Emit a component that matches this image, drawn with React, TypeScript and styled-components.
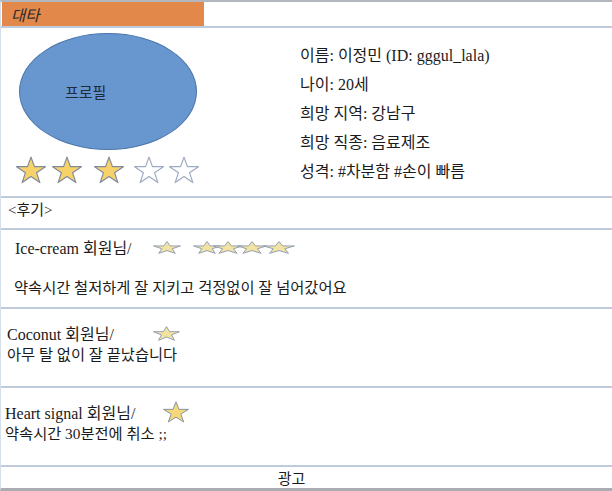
import React from "react";
import styled, { createGlobalStyle } from "styled-components";

const GlobalStyle = createGlobalStyle`
  html, body { margin: 0; padding: 0; background: #ffffff; }
  * { box-sizing: border-box; }
`;

const SERIF = `"Liberation Serif", "Noto Sans CJK KR", serif`;
const SANS = `"Noto Sans CJK KR", "Noto Sans", sans-serif`;

const Page = styled.div`
  width: 612px;
  height: 491px;
  display: flex;
  flex-direction: column;
  border-top: 2px solid #b3b7bd;
  border-bottom: 3px solid #a9adb3;
  border-left: 1px solid #d6dee9;
  font-family: ${SERIF};
  color: #1b1b1b;
  overflow: hidden;
`;

const Section = styled.div<{ $h: number }>`
  height: ${(p) => p.$h}px;
  flex: 0 0 auto;
  border-bottom: 2px solid #bfcbdc;
  position: relative;
`;

const HeaderTab = styled.div`
  width: 202px;
  height: 100%;
  margin-left: 1px;
  background: #e2884a;
  font-family: ${SANS};
  font-style: italic;
  font-size: 15.5px;
  line-height: 24px;
  padding-left: 9px;
  color: #2a2a2a;
`;

const ProfileGrid = styled.div`
  display: grid;
  grid-template-columns: 299px 1fr;
  height: 100%;
`;

const LeftCol = styled.div`
  display: flex;
  flex-direction: column;
  padding-left: 18px;
  padding-top: 5px;
`;

const Avatar = styled.div`
  width: 178px;
  height: 117px;
  border-radius: 50%;
  background: #6896cf;
  border: 1px solid #4d76ab;
  display: flex;
  align-items: center;
  padding-left: 45px;
  font-family: ${SANS};
  font-size: 15px;
  color: #1f2a3a;
`;

const StarRow = styled.div`
  display: flex;
  align-items: center;
  margin-top: 6px;
  margin-left: -3px;
`;

const StarSlot = styled.span<{ $ml: number }>`
  display: inline-flex;
  margin-left: ${(p) => p.$ml}px;
`;

const InfoList = styled.div`
  padding-top: 13px;
  display: flex;
  flex-direction: column;
`;

const InfoLine = styled.div`
  font-size: 16px;
  line-height: 29px;
  white-space: nowrap;
`;

const PlainLine = styled.div<{ $pl: number }>`
  font-size: 15px;
  line-height: 24px;
  padding-left: ${(p) => p.$pl}px;
  white-space: nowrap;
`;

const ReviewHead = styled.div<{ $pl: number; $pt: number }>`
  display: flex;
  align-items: center;
  padding-left: ${(p) => p.$pl}px;
  padding-top: ${(p) => p.$pt}px;
  font-size: 16px;
  height: 22px;
  box-sizing: content-box;
  white-space: nowrap;
`;

const Name = styled.span<{ $w: number }>`
  display: inline-block;
  width: ${(p) => p.$w}px;
`;

const ReviewBody = styled.div<{ $pl: number; $mt: number }>`
  padding-left: ${(p) => p.$pl}px;
  margin-top: ${(p) => p.$mt}px;
  font-size: 15.3px;
  line-height: 22px;
  white-space: nowrap;
`;

const SmallStars = styled.span`
  display: inline-flex;
  align-items: center;
`;

const Overlap = styled.span<{ $ml: number }>`
  display: inline-flex;
  margin-left: ${(p) => p.$ml}px;
`;

const AdBar = styled.div`
  flex: 1 1 auto;
  display: flex;
  align-items: center;
  justify-content: center;
  font-family: ${SANS};
  font-size: 15px;
  padding-right: 30px;
`;

type StarProps = { w: number; h: number; fill: string; stroke: string; sw?: number };

const Star: React.FC<StarProps> = ({ w, h, fill, stroke, sw = 3 }) => (
  <svg width={w} height={h} viewBox="0 0 100 100" preserveAspectRatio="none">
    <polygon
      points="50,4 61.5,38 98,38 68.5,59.5 79.5,95 50,73.5 20.5,95 31.5,59.5 2,38 38.5,38"
      fill={fill}
      stroke={stroke}
      strokeWidth={sw}
      strokeLinejoin="round"
      vectorEffect="non-scaling-stroke"
    />
  </svg>
);

const bigStars = [
  { ml: 0, on: true },
  { ml: 6, on: true },
  { ml: 12, on: true },
  { ml: 10, on: false },
  { ml: 5, on: false },
];

const smallFill = "#f3e3a2";
const smallStroke = "#93a0b4";

export default function App() {
  return (
    <>
      <GlobalStyle />
      <Page>
        <Section $h={26}>
          <HeaderTab>대타</HeaderTab>
        </Section>

        <Section $h={170}>
          <ProfileGrid>
            <LeftCol>
              <Avatar>프로필</Avatar>
              <StarRow>
                {bigStars.map((s, i) => (
                  <StarSlot key={i} $ml={s.ml}>
                    <Star
                      w={30}
                      h={28}
                      fill={s.on ? "#f7d26a" : "#ffffff"}
                      stroke={s.on ? "#7f8a9c" : "#9eaac0"}
                      sw={1.2}
                    />
                  </StarSlot>
                ))}
              </StarRow>
            </LeftCol>
            <InfoList>
              <InfoLine>이름: 이정민 (ID: gggul_lala)</InfoLine>
              <InfoLine>나이: 20세</InfoLine>
              <InfoLine>희망 지역: 강남구</InfoLine>
              <InfoLine>희망 직종: 음료제조</InfoLine>
              <InfoLine>성격: #차분함 #손이 빠름</InfoLine>
            </InfoList>
          </ProfileGrid>
        </Section>

        <Section $h={32}>
          <PlainLine $pl={7}>&lt;후기&gt;</PlainLine>
        </Section>

        <Section $h={79}>
          <ReviewHead $pl={14} $pt={6}>
            <Name $w={138}>Ice-cream 회원님/</Name>
            <SmallStars>
              <Star w={28} h={13} fill={smallFill} stroke={smallStroke} sw={1} />
              <Overlap $ml={12}>
                <Star w={28} h={13} fill={smallFill} stroke={smallStroke} sw={1} />
              </Overlap>
              <Overlap $ml={-8}>
                <Star w={30} h={13} fill={smallFill} stroke={smallStroke} sw={1} />
              </Overlap>
              <Overlap $ml={-6}>
                <Star w={30} h={13} fill={smallFill} stroke={smallStroke} sw={1} />
              </Overlap>
              <Overlap $ml={-4}>
                <Star w={32} h={13} fill={smallFill} stroke={smallStroke} sw={1} />
              </Overlap>
            </SmallStars>
          </ReviewHead>
          <ReviewBody $pl={13} $mt={19}>
            약속시간 철저하게 잘 지키고 걱정없이 잘 넘어갔어요
          </ReviewBody>
        </Section>

        <Section $h={79}>
          <ReviewHead $pl={6} $pt={13}>
            <Name $w={146}>Coconut 회원님/</Name>
            <Star w={27} h={15} fill={smallFill} stroke={smallStroke} sw={1} />
          </ReviewHead>
          <ReviewBody $pl={6} $mt={0}>
            아무 탈 없이 잘 끝났습니다
          </ReviewBody>
        </Section>

        <Section $h={79}>
          <ReviewHead $pl={4} $pt={13}>
            <Name $w={158}>Heart signal 회원님/</Name>
            <Star w={26} h={22} fill="#f6d878" stroke="#8592a6" sw={1} />
          </ReviewHead>
          <ReviewBody $pl={4} $mt={0}>
            약속시간 30분전에 취소 ;;
          </ReviewBody>
        </Section>

        <AdBar>광고</AdBar>
      </Page>
    </>
  );
}
